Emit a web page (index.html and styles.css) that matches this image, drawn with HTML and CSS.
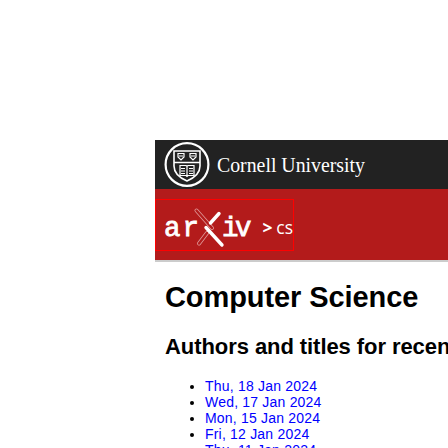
FILE: index.html
```html
<!DOCTYPE html>
<html lang="en">
<head>
<meta charset="utf-8">
<title>Computer Science</title>
<link rel="stylesheet" href="styles.css">
</head>
<body>
<div class="page">
  <header>
    <div class="cornell">
      <svg class="brand" viewBox="0 0 293 49" width="293" height="49" aria-label="Cornell University">
        <g fill="none" stroke="#fff">
          <circle cx="32" cy="24.5" r="21.4" stroke-width="2.2"/>
          <path d="M19 11H45V26C45 33 39 38 32 41C25 38 19 33 19 26Z" stroke-width="1.6"/>
          <path d="M19 22.5H45" stroke-width="1.5"/>
          <path d="M23 13.5h6v3.5l-3 3-3-3zM35 13.5h6v3.5l-3 3-3-3zM24 16h4M36 16h4" stroke-width="1.2"/>
          <path d="M25 25.5h6l1 1 1-1h6v10h-6l-1 1-1-1h-6zM32 26v11M26 28.5h4M26 31h4M26 33.5h4M34 28.5h4M34 31h4M34 33.5h4" stroke-width="1.2"/>
        </g>
        <text class="university" x="62" y="31.5" textLength="148" lengthAdjust="spacingAndGlyphs">Cornell University</text>
      </svg>
    </div>
    <div class="banner">
      <div class="crumbs">
        <svg class="logo" viewBox="0 0 100 50" width="100" height="50">
          <g class="wordmark">
            <text x="8 26.5" y="35.5">ar</text>
            <text x="66 79" y="35.5">iv</text>
          </g>
          <g fill="none" stroke-linecap="round">
            <path d="M40.5 10.5L56 28M51 33L43 43.5" stroke="#e09b9b" stroke-width="4"/>
            <path d="M40.5 10.5L56 28M51 33L43 43.5" stroke="#b31b1b" stroke-width="2.4"/>
            <path d="M63 13.5L54.5 23M50 27.5L66 45" stroke="#fff" stroke-width="3.4"/>
          </g>
        </svg>
        <span class="arrow">&gt;</span><span class="archive">cs</span>
      </div>
    </div>
  </header>
  <main>
    <h1>Computer Science</h1>
    <h2>Authors and titles for recent submissions</h2>
    <ul>
      <li><a href="#">Thu, 18 Jan 2024</a></li>
      <li><a href="#">Wed, 17 Jan 2024</a></li>
      <li><a href="#">Mon, 15 Jan 2024</a></li>
      <li><a href="#">Fri, 12 Jan 2024</a></li>
      <li><a href="#">Thu, 11 Jan 2024</a></li>
    </ul>
  </main>
</div>
</body>
</html>
```
FILE: styles.css
```css
html, body { margin: 0; height: 448px; overflow: hidden; background: #fff; }
.page { box-sizing: border-box; height: 448px; overflow: hidden; padding: 140px 0 0 155px; font-family: "Liberation Sans", Arial, sans-serif; color: #000; }
.cornell { height: 49px; background: #222; }
.brand, .logo { display: block; flex: none; }
.university { font: 21px "Liberation Serif", serif; fill: #fff; }
.banner { box-sizing: border-box; height: 73px; padding-top: 10px; background: #b31b1b; border-bottom: 2px solid #ccc; }
.crumbs { box-sizing: border-box; display: flex; width: 139px; height: 52px; border: 1px solid #f00; color: #fff; font: 17.5px/54px "Open Sans", sans-serif; }
.wordmark { font: 27.5px "Liberation Mono", monospace; fill: #fff; stroke: #fff; stroke-width: .8px; }
.arrow { width: 15px; margin-left: 6.5px; font-weight: bold; }
.archive { white-space: nowrap; }
main { padding-left: 10px; white-space: nowrap; }
h1 { margin: 18px 0 0; font-size: 29px; line-height: 34px; letter-spacing: -.08px; }
h2 { margin: 20px 0 0; font-size: 22px; line-height: 26px; letter-spacing: -.07px; }
ul { margin: 18px 0 0; padding-left: 40px; font-size: 14px; line-height: 16px; letter-spacing: .2px; }
a { color: #00f; text-decoration: none; }
```
